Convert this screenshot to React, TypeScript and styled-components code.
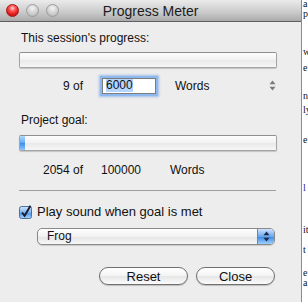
import React from "react";
import styled, { createGlobalStyle } from "styled-components";

const GlobalStyle = createGlobalStyle`
  html, body {
    margin: 0;
    padding: 0;
    background: #ffffff;
    overflow: hidden;
  }
  * {
    box-sizing: border-box;
  }
`;

const Screen = styled.div`
  display: flex;
  width: 308px;
  height: 302px;
  overflow: hidden;
  font-family: "Liberation Sans", Arial, sans-serif;
`;

const Window = styled.div`
  flex: 0 0 302px;
  display: flex;
  flex-direction: column;
  background: #ededed;
  border-right: 1px solid #8c8c8c;
`;

const TitleBar = styled.div`
  display: grid;
  grid-template-columns: 1fr auto 1fr;
  align-items: center;
  height: 22px;
  padding: 0 6px;
  background: linear-gradient(#ebebeb, #c9c9c9 60%, #aaaaaa);
  border-bottom: 1px solid #5f5f5f;
`;

const Lights = styled.div`
  display: flex;
  gap: 7px;
`;

const Light = styled.span<{ $red?: boolean }>`
  width: 13px;
  height: 13px;
  border-radius: 50%;
  border: 1px solid ${(p) => (p.$red ? "#a41717" : "#9b9b9b")};
  background: ${(p) =>
    p.$red
      ? "radial-gradient(circle at 50% 30%, #ffd0d0 0%, #ff4b4b 35%, #d20d0d 75%, #ff6a6a 100%)"
      : "radial-gradient(circle at 50% 30%, #f4f4f4 0%, #d6d6d6 45%, #bdbdbd 80%, #e0e0e0 100%)"};
`;

const Title = styled.div`
  font-size: 14px;
  color: #1c1c1c;
  margin-top: 1px;
`;

const Content = styled.div`
  display: flex;
  flex-direction: column;
  padding: 8px 24px 0 19px;
  font-size: 12px;
  color: #111;
`;

const Label = styled.div<{ $top?: number }>`
  line-height: 16px;
  margin-top: ${(p) => p.$top ?? 0}px;
  padding-left: 2px;
`;

const Bar = styled.div<{ $top?: number }>`
  position: relative;
  height: 16px;
  margin-top: ${(p) => p.$top ?? 0}px;
  border: 1px solid #a4a4a4;
  border-top-color: #8f8f8f;
  border-radius: 2px;
  background: linear-gradient(#fdfdfd, #f2f2f2 50%, #e9e9e9 51%, #f6f6f6);
  box-shadow: 0 1px 1px rgba(0, 0, 0, 0.18);
  overflow: hidden;
`;

const Fill = styled.div`
  height: 100%;
  background: linear-gradient(#b3d8ff, #5ea9f3 50%, #3a8de8 51%, #8cc4ff);
`;

const Row = styled.div<{ $top?: number }>`
  display: flex;
  align-items: center;
  height: 17px;
  margin-top: ${(p) => p.$top ?? 0}px;
`;

const Count = styled.span`
  width: 64px;
  text-align: right;
`;

const Goal = styled.span`
  width: 54px;
  margin-left: 18px;
`;

const Field = styled.span`
  width: 54px;
  height: 16px;
  margin-left: 19px;
  display: flex;
  align-items: center;
  padding-left: 3px;
  background: #fff;
  border: 1px solid #7c7c7c;
  box-shadow: 0 0 0 2px #8fb9ee, 0 0 2px 3px rgba(110, 160, 230, 0.6);
`;

const Selected = styled.span`
  background: #b5d5ff;
  line-height: 13px;
`;

const Unit = styled.span<{ $gap: number }>`
  margin-left: ${(p) => p.$gap}px;
`;

const Stepper = styled.span`
  margin-left: auto;
  margin-right: 1px;
  display: flex;
`;

const Separator = styled.hr`
  margin: 12px 1px 0 0;
  border: 0;
  border-top: 1px solid #9e9e9e;
`;

const CheckRow = styled.label`
  display: flex;
  align-items: center;
  gap: 4px;
  margin-top: 13px;
  font-size: 13px;
  line-height: 16px;
`;

const Popup = styled.div`
  display: flex;
  align-items: stretch;
  height: 17px;
  margin: 8px 2px 0 18px;
  border: 1px solid #8a8a8a;
  border-radius: 5px;
  overflow: hidden;
  background: linear-gradient(#ffffff, #f1f1f1 50%, #e4e4e4 51%, #f7f7f7);
  box-shadow: 0 1px 1px rgba(0, 0, 0, 0.15);
`;

const PopupText = styled.span`
  flex: 1;
  padding-left: 9px;
  font-size: 12px;
  line-height: 15px;
`;

const PopupArrows = styled.span`
  width: 17px;
  display: flex;
  align-items: center;
  justify-content: center;
  border-left: 1px solid #5d86c4;
  background: linear-gradient(#cfe3ff, #6aa6ee 50%, #3d86e2 51%, #9cd0ff);
`;

const Buttons = styled.div`
  display: flex;
  justify-content: flex-end;
  gap: 8px;
  margin: 22px 2px 0 0;
`;

const Button = styled.button<{ $w: number }>`
  width: ${(p) => p.$w}px;
  height: 18px;
  padding: 0;
  border: 1px solid #6f6f6f;
  border-radius: 9px;
  background: linear-gradient(#ffffff, #f3f3f3 50%, #e6e6e6 51%, #fbfbfb);
  box-shadow: 0 1px 1px rgba(0, 0, 0, 0.2);
  font-family: "Liberation Sans", Arial, sans-serif;
  font-size: 13px;
  color: #111;
  line-height: 15px;
`;

const Behind = styled.div`
  flex: 1;
  overflow: hidden;
  padding-left: 1px;
  font-family: "Liberation Serif", "Times New Roman", serif;
  font-size: 10px;
  line-height: 10px;
  color: #111;
  white-space: nowrap;
`;

const BehindLine = styled.div<{ $top: number; $link?: boolean }>`
  margin-top: ${(p) => p.$top}px;
  color: ${(p) => (p.$link ? "#1a2a8a" : "#111")};
`;

const behindLines = [
  { top: -1, text: "a" },
  { top: 0, text: "p" },
  { top: 28, text: "w" },
  { top: 6, text: "e" },
  { top: 18, text: "ne" },
  { top: 4, text: "ly" },
  { top: 20, text: "e" },
  { top: 38, text: "l", link: true },
  { top: 32, text: "it" },
  { top: 10, text: "t" },
  { top: 13, text: "e" },
  { top: 0, text: "a" },
];

const CheckBox = () => (
  <svg width="14" height="14" viewBox="0 0 14 14">
    <defs>
      <linearGradient id="cb" x1="0" y1="0" x2="0" y2="1">
        <stop offset="0" stopColor="#d5e8ff" />
        <stop offset="0.5" stopColor="#79b1f1" />
        <stop offset="0.51" stopColor="#4b90e6" />
        <stop offset="1" stopColor="#a5d3ff" />
      </linearGradient>
    </defs>
    <rect x="0.5" y="1.5" width="12" height="12" rx="2" fill="url(#cb)" stroke="#4d6f9e" />
    <path d="M3 7.5 L5.6 10.8 L11.5 0.8" fill="none" stroke="#1b1b2e" strokeWidth="1.9" />
  </svg>
);

const UpDown = ({ color }: { color: string }) => (
  <svg width="7" height="11" viewBox="0 0 7 11">
    <path d="M3.5 0.5 L6.5 4.2 L0.5 4.2 Z" fill={color} />
    <path d="M3.5 10.5 L6.5 6.8 L0.5 6.8 Z" fill={color} />
  </svg>
);

export default function App() {
  return (
    <>
      <GlobalStyle />
      <Screen>
        <Window>
          <TitleBar>
            <Lights>
              <Light $red />
              <Light />
              <Light />
            </Lights>
            <Title>Progress Meter</Title>
            <span />
          </TitleBar>
          <Content>
            <Label>This session's progress:</Label>
            <Bar $top={6} />
            <Row $top={9}>
              <Count>9 of</Count>
              <Field>
                <Selected>6000</Selected>
              </Field>
              <Unit $gap={19}>Words</Unit>
              <Stepper>
                <UpDown color="#7a7a7a" />
              </Stepper>
            </Row>
            <Label $top={18}>Project goal:</Label>
            <Bar $top={7}>
              <Fill style={{ width: `${(2054 / 100000) * 100}%` }} />
            </Bar>
            <Row $top={10}>
              <Count>2054 of</Count>
              <Goal>100000</Goal>
              <Unit $gap={15}>Words</Unit>
            </Row>
            <Separator />
            <CheckRow>
              <CheckBox />
              Play sound when goal is met
            </CheckRow>
            <Popup>
              <PopupText>Frog</PopupText>
              <PopupArrows>
                <UpDown color="#1d2a44" />
              </PopupArrows>
            </Popup>
            <Buttons>
              <Button $w={89}>Reset</Button>
              <Button $w={79}>Close</Button>
            </Buttons>
          </Content>
        </Window>
        <Behind>
          {behindLines.map((l, i) => (
            <BehindLine key={i} $top={l.top} $link={l.link}>
              {l.text}
            </BehindLine>
          ))}
        </Behind>
      </Screen>
    </>
  );
}
